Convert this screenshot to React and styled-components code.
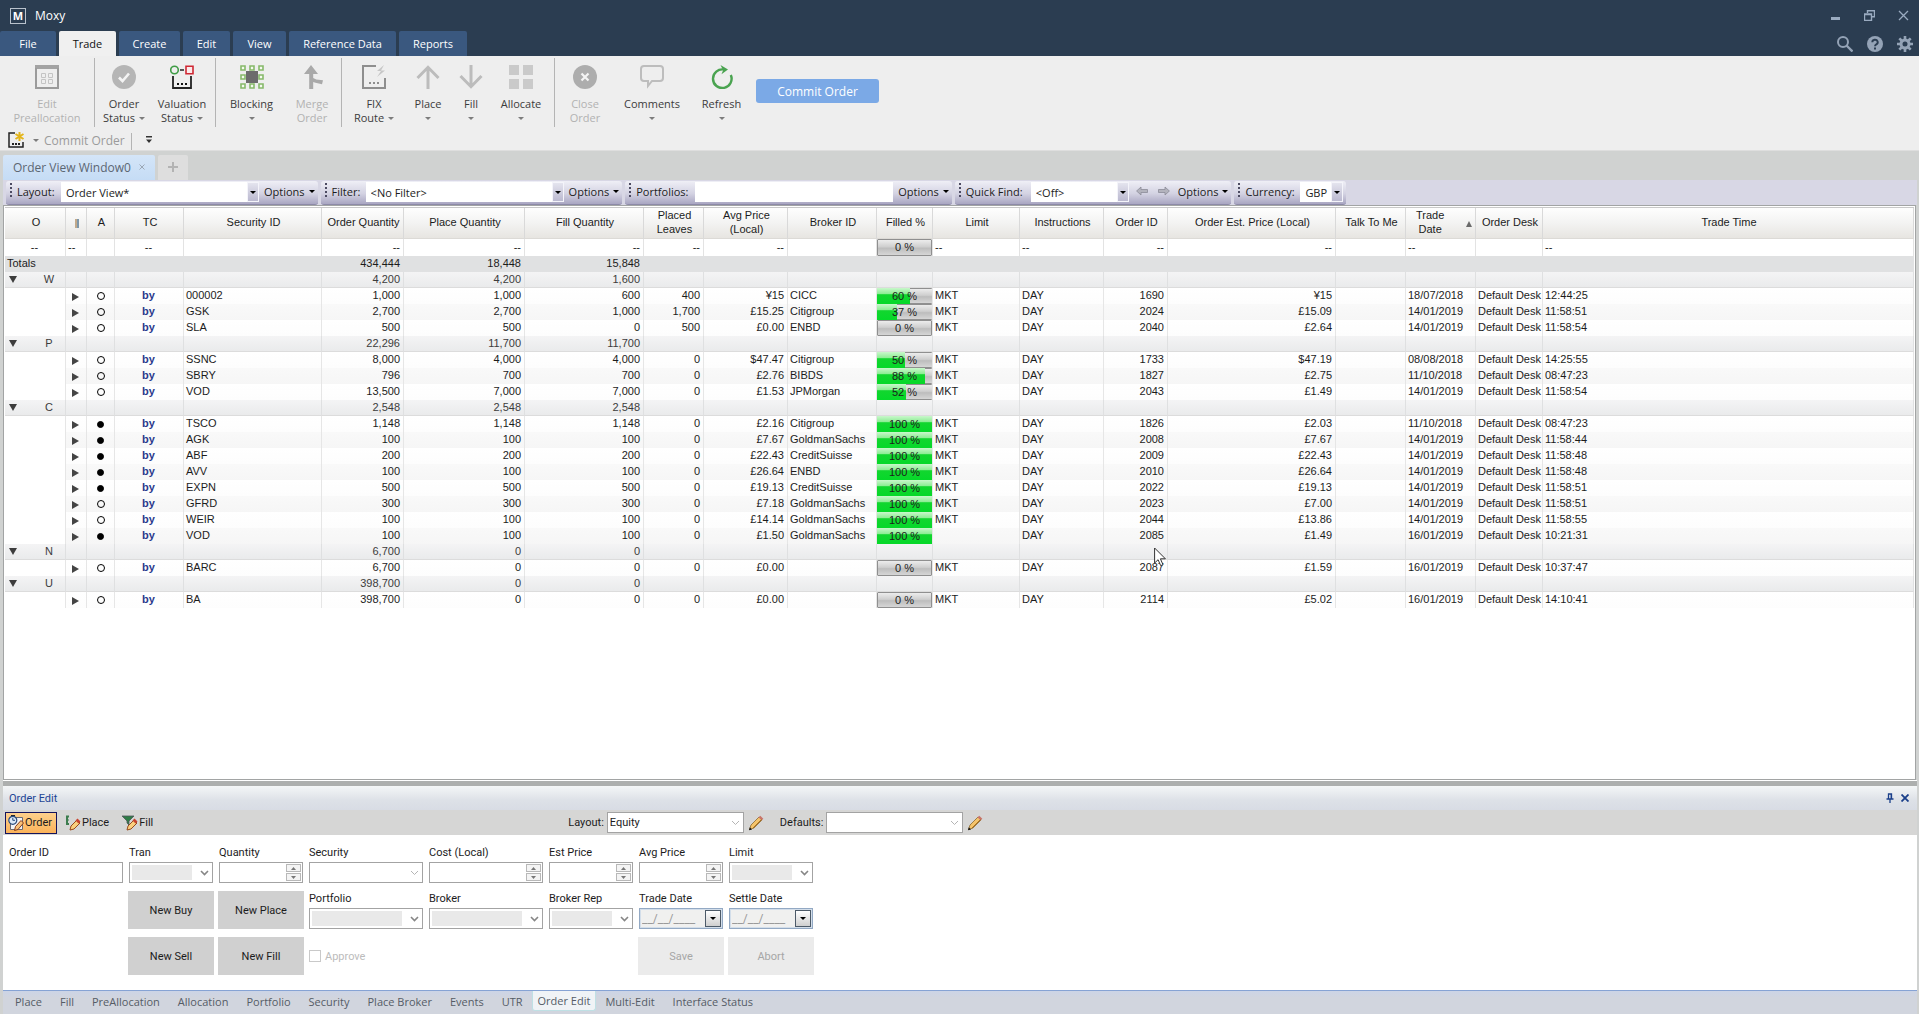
import React from "react";
import styled, { createGlobalStyle, css } from "styled-components";

const segoe = `"Open Sans", "Noto Sans", sans-serif`;
const tahoma = `Roboto, "DejaVu Sans", sans-serif`;
const arial = `"Liberation Sans", Arial, sans-serif`;

const Global = createGlobalStyle`
  *, *::before, *::after { box-sizing: border-box; }
  body { margin: 0; background: #d0d2d1; font-family: ${segoe}; font-size: 11px; color: #1c1c1c; }
  button, input, select { font: inherit; color: inherit; margin: 0; padding: 0; border: 0; border-radius: 0; background: none; outline: none; }
  svg { display: block; flex: none; }
`;

const Page = styled.div`
  display: flex;
  flex-direction: column;
  min-height: 100vh;
`;

/* ---------- title bar and menu tabs ---------- */

const Chrome = styled.header`
  background: #2b3d51;
  color: #fff;
`;

const TitleRow = styled.div`
  display: flex;
  align-items: center;
  height: 31px;
  padding: 0 10px;
  font-size: 12px;
`;

const Logo = styled.span`
  display: grid;
  place-items: center;
  width: 16px;
  height: 16px;
  margin-right: 9px;
  border: 1px solid #b9c2cc;
  font-size: 11px;
  font-weight: 700;
  line-height: 14px;
`;

const WindowButtons = styled.div`
  display: flex;
  gap: 23px;
  margin-left: auto;
  color: #9aabc0;
`;

const IconButton = styled.button`
  display: grid;
  place-items: center;
`;

const MenuRow = styled.nav`
  display: flex;
  align-items: flex-end;
  gap: 3px;
  height: 25px;
`;

const MenuTab = styled.button`
  width: ${(p) => p.$w}px;
  height: 25px;
  border-radius: 2px 2px 0 0;
  background: ${(p) => (p.$active ? "#f0f0f0" : "#3a587f")};
  color: ${(p) => (p.$active ? "#111" : "#fff")};
`;

const MenuTools = styled.div`
  display: flex;
  align-items: center;
  align-self: center;
  gap: 14px;
  margin-left: auto;
  padding-right: 6px;
  color: #94a3b6;
`;

/* ---------- ribbon ---------- */

const Ribbon = styled.div`
  display: flex;
  height: 73px;
  background: #eeeeee;
`;

const RibbonItem = styled.button`
  display: flex;
  flex-direction: column;
  align-items: center;
  width: ${(p) => p.$w}px;
  padding-top: 9px;
  line-height: 14px;
  color: ${(p) => (p.disabled ? "#b2b2b2" : "#3c3c3c")};
`;

const RibbonIcon = styled.span`
  display: grid;
  place-items: center;
  width: 24px;
  height: 24px;
  margin-bottom: 8px;
`;

const RibbonLine = styled.span`
  display: flex;
  align-items: center;
  gap: 4px;
  height: 14px;
`;

const Divider = styled.span`
  width: 1px;
  height: ${(p) => p.$h}px;
  margin: 2px ${(p) => p.$m || 0}px 0;
  background: #b4b4b4;
`;

const CommitButton = styled.button`
  width: 123px;
  height: 24px;
  margin: 23px 0 0 6px;
  border-radius: 3px;
  background: #7ba9e6;
  color: #fff;
  font-size: 12px;
`;

const Caret = styled.span`
  width: 0;
  height: 0;
  border: 3px solid transparent;
  border-bottom-width: 0;
  border-top-color: ${(p) => p.$c || "#7c7c7c"};
`;

const QuickRow = styled.div`
  display: flex;
  align-items: center;
  height: 22px;
  padding: 1px 0 0 8px;
  background: #eeeeee;
  border-bottom: 1px solid #dedede;
  font-size: 12px;
  color: #9b9b9b;
`;

const QuickButton = styled.button`
  display: flex;
  align-items: center;
  gap: 8px;
  margin-right: 5px;
`;

/* ---------- document tabs ---------- */

const DocTabs = styled.div`
  display: flex;
  align-items: flex-end;
  gap: 3px;
  height: 29px;
  padding-left: 3px;
`;

const DocTab = styled.button`
  display: flex;
  align-items: center;
  justify-content: ${(p) => (p.$plus ? "center" : "space-between")};
  width: ${(p) => (p.$plus ? 30 : 152)}px;
  height: 25px;
  padding: ${(p) => (p.$plus ? "0 0 1px" : "0 10px 1px")};
  border-radius: 2px 2px 0 0;
  background: ${(p) => (p.$plus ? "#dedede" : "linear-gradient(#d4e5f8, #c5dcf5)")};
  color: ${(p) => (p.$plus ? "#b4b4b4" : "#5c6672")};
  font-size: 12px;
`;

/* ---------- view toolbar ---------- */

const Strip = styled.div`
  display: flex;
  gap: 3px;
  height: 25px;
  margin: 0 2px 0 3px;
  padding: 1px 3px;
  background: #d8d7e5;
`;

const StripGroup = styled.form`
  display: flex;
  align-items: flex-start;
  height: 24px;
  padding: 1px 3px 0;
  border-radius: 3px;
  border-bottom: 1px solid #8d8aa8;
  background: linear-gradient(#efeff6, #d3d2e2 55%, #a9a6c2);
`;

const Grip = styled.span`
  width: 2px;
  height: 16px;
  margin: 1px 5px 0 1px;
  background: repeating-linear-gradient(#4c4b62 0 2px, transparent 2px 4px);
`;

const StripLabel = styled.label`
  min-width: ${(p) => p.$w}px;
  line-height: 19px;
`;

const ComboWrap = styled.span`
  position: relative;
  display: block;
  width: ${(p) => p.$w}px;
`;

const StripSelect = styled.select`
  display: block;
  width: 100%;
  height: 20px;
  padding: 0 12px 0 5px;
  appearance: none;
  background: #fff;
`;

const StripInput = styled.input`
  width: ${(p) => p.$w}px;
  height: 20px;
  background: #fff;
`;

const StripArrow = styled.span`
  position: absolute;
  top: 0;
  right: 0;
  display: grid;
  place-items: center;
  width: 12px;
  height: 20px;
  border: 1px solid #f4f4fa;
  background: linear-gradient(#e4e4ee, #bbb9d0);
  pointer-events: none;
`;

const OptionsButton = styled.button`
  display: flex;
  align-items: center;
  gap: 4px;
  height: 19px;
  padding: 0 0 0 5px;
`;

const FindArrow = styled.button`
  margin: 4px 3px 0 7px;
`;

/* ---------- order grid ---------- */

const Frame = styled.main`
  flex: 1;
  margin: 0 3px 0 3px;
  padding: 1px;
  border: 1px solid #a2a4a4;
  background: #fff;
`;

const Grid = styled.table`
  width: 100%;
  table-layout: fixed;
  border-collapse: separate;
  border-spacing: 0;
  border-top: 1px solid #c9c9c9;
  font-family: ${arial};
`;

const Th = styled.th`
  height: 31px;
  padding: 0 0 2px 2px;
  border-right: 1px solid #d9d9d9;
  border-bottom: 1px solid #dcdad6;
  background: linear-gradient(#fefefe, #f3f3f2 50%, #e7e5e1);
  font-weight: 400;
  line-height: 14px;
  white-space: pre-line;
`;

const HeadMark = styled.svg`
  margin: 2px auto 0;
`;

const SortHead = styled.span`
  display: flex;
  align-items: center;
  justify-content: space-between;
  padding: 0 3px 0 8px;
`;

const SortMark = styled.span`
  margin-top: 4px;
  border: 3px solid transparent;
  border-top: 0;
  border-bottom: 6px solid #6a6a6a;
`;

const rowLook = {
  filter: css`
    --line: #e3e3e3;
    background: #fff;
  `,
  totals: css`
    --line: #e0e1e2;
    background: #e0e1e2;
  `,
  group: css`
    --line: #dfe0e1;
    background: linear-gradient(#f4f4f5, #e9eaeb);
    color: #3c3c3c;
  `,
  order: css`
    --line: #e6e6e6;
    background: linear-gradient(#ffffff, #fdfdfd);
  `,
  orderAlt: css`
    --line: #e6e6e6;
    background: linear-gradient(#f9f9f9, #f6f6f6);
  `,
};

const Tr = styled.tr`
  ${(p) => rowLook[p.$kind]}
`;

const Td = styled.td`
  height: ${(p) => (p.$tall ? 17 : 16)}px;
  padding: ${(p) => (p.$flush ? "0" : p.$ruled || p.$tall ? "0 3px 0 2px" : "0 3px 1px 2px")};
  border-right: 1px solid var(--line);
  border-bottom: ${(p) => (p.$ruled ? "1px solid #dcdcdc" : "0")};
  background: ${(p) => (p.$blank ? "#fff" : "transparent")};
  line-height: 15px;
  text-align: ${(p) => p.$align || "left"};
  white-space: nowrap;
  overflow: ${(p) => (p.$spill ? "visible" : "hidden")};
`;

const Side = styled.span`
  color: #2b3a8c;
  font-weight: 700;
`;

const Dot = styled.span`
  display: block;
  width: ${(p) => (p.$full ? 7 : 8)}px;
  height: ${(p) => (p.$full ? 7 : 8)}px;
  margin: 0 auto;
  border: 1px solid #000;
  border-radius: 50%;
  background: ${(p) => (p.$full ? "#000" : "transparent")};
`;

const Expand = styled.button`
  display: block;
  width: 0;
  height: 0;
  margin: 2px 0 0 6px;
  border: 4px solid transparent;
  border-left: 7px solid #444;
  border-right: 0;
`;

const GroupCell = styled.span`
  display: flex;
  align-items: center;
  gap: 19px;
  padding-left: 4px;
`;

const GroupName = styled.span`
  width: 26px;
  text-align: center;
`;

const Collapse = styled.button`
  width: 0;
  height: 0;
  border: 4px solid transparent;
  border-top: 7px solid #3d3d3d;
  border-bottom: 0;
`;

const Meter = styled.div`
  position: relative;
  height: ${(p) => (p.$tall ? 17 : 16)}px;
  border: 1px solid #8f8f8f;
  border-width: ${(p) => (p.$zero ? "1px" : "1px 0")};
  border-radius: 1px;
  background: linear-gradient(#ececec, #cfcfcf 45%, #bdbdbd 55%, #d6d6d6);
  line-height: 15px;
  text-align: center;
`;

const MeterFill = styled.span`
  position: absolute;
  top: -1px;
  bottom: -1px;
  left: 0;
  background: linear-gradient(#c9f7cb, #8fee96 35%, #12d62f 42%, #06d829);
`;

const MeterText = styled.span`
  position: relative;
`;

const Splitter = styled.div`
  height: 6px;
  margin: 0 2px 0 3px;
  border-top: 1px solid #fff;
  background: #adafae;
`;

/* ---------- order edit panel ---------- */

const Panel = styled.section`
  margin: 0 2px 0 3px;
  background: #fff;
  font-family: ${tahoma};
`;

const PanelTitle = styled.div`
  display: flex;
  align-items: center;
  gap: 7px;
  height: 24px;
  padding: 0 8px 0 6px;
  background: linear-gradient(#f4f6f7, #dde1e7 60%, #d8dce4);
  color: #1d4596;
`;

const PanelName = styled.h2`
  flex: 1;
  margin: 0;
  font: inherit;
`;

const PanelBar = styled.div`
  display: flex;
  align-items: center;
  height: 25px;
  padding-left: 2px;
  background: #d6d6d5;
`;

const ModeButton = styled.button`
  display: flex;
  align-items: center;
  gap: 1px;
  height: 22px;
  margin-right: 5px;
  padding: 0 4px 0 2px;
  border: 1px solid ${(p) => (p.$active ? "#14145c" : "transparent")};
  background: ${(p) => (p.$active ? "linear-gradient(#fdd08c, #fbb35a)" : "none")};
`;

const BarFields = styled.div`
  display: flex;
  align-items: center;
  margin-left: 405px;
`;

const BarLabel = styled.label`
  padding-right: 3px;
`;

const PencilButton = styled.button`
  margin: 0 16px 0 4px;
`;

const Form = styled.form`
  display: grid;
  grid-template-columns: 114px 84px 84px 114px 114px 84px 84px 84px;
  grid-template-rows: 38px 38px 38px;
  gap: 8px 6px;
  height: 155px;
  padding: 10px 6px;
`;

const Field = styled.div`
  display: flex;
  flex-direction: column;
  justify-content: space-between;
  grid-column: ${(p) => p.$col};
  grid-row: ${(p) => p.$row};
`;

const FieldLabel = styled.label`
  line-height: 16px;
`;

const Box = styled.span`
  position: relative;
  display: block;
  width: ${(p) => (p.$w ? p.$w + "px" : "auto")};
  height: 21px;
`;

const TextBox = styled.input`
  display: block;
  width: 100%;
  height: 21px;
  padding: 0 4px;
  border: 1px solid #a3a3a3;
  background: #fff;
`;

const DateBox = styled(TextBox)`
  padding: 0 2px;
  border-color: #93a9c4;
  background: #f0f0ef;
  box-shadow: inset 0 0 0 1px #d3deea;
  color: #9a9a9a;
  font-size: 12px;
`;

const ListBox = styled.select`
  display: block;
  width: 100%;
  height: 21px;
  padding: 0 20px 0 2px;
  appearance: none;
  border: 1px solid #a3a3a3;
  opacity: 1;
  background: ${(p) =>
    p.$grey
      ? "linear-gradient(#e9e9e9, #e9e9e9) 2px 2px / calc(100% - 22px) 15px no-repeat #fff"
      : "#fff"};
`;

const ArrowMark = styled.svg`
  position: absolute;
  top: 8px;
  right: 4px;
  pointer-events: none;
`;

const Spin = styled.span`
  position: absolute;
  top: 2px;
  right: 2px;
  display: grid;
  gap: 1px;
`;

const SpinButton = styled.button`
  display: grid;
  place-items: center;
  width: 15px;
  height: 8px;
  border: 1px solid #b8b8b8;
  background: #f4f4f4;
`;

const DateButton = styled.button`
  position: absolute;
  top: 2px;
  right: 2px;
  display: grid;
  place-items: center;
  width: 16px;
  height: 17px;
  border: 1px solid #4d5a68;
  background: linear-gradient(#fff, #cfcfcf);
`;

const BigButton = styled.button`
  grid-column: ${(p) => p.$col};
  grid-row: ${(p) => p.$row};
  margin: 0 -1px;
  background: ${(p) => (p.disabled ? "#ebebeb" : "#d0d0d0")};
  color: ${(p) => (p.disabled ? "#a6a6a6" : "#1c1c1c")};
`;

const Approve = styled.label`
  display: flex;
  align-items: center;
  gap: 4px;
  grid-column: 4;
  grid-row: 3;
  color: #bcbcbc;
`;

const Check = styled.input`
  width: 12px;
  height: 12px;
  appearance: none;
  border: 1px solid #c9c9c9;
  background: #fff;
`;

const BottomTabs = styled.nav`
  display: flex;
  height: 24px;
  margin: 0 2px 0 3px;
  padding-left: 3px;
  border-top: 1px solid #86a3d4;
  background: linear-gradient(#ccd4e6, #d1d5de 30%);
`;

const BottomTab = styled.button`
  height: 20px;
  padding: 0 ${(p) => (p.$active ? 5 : 9)}px;
  border: ${(p) => (p.$active ? "1px solid #bfe0e4" : "0")};
  border-top: 0;
  border-radius: 0 0 3px 3px;
  background: ${(p) => (p.$active ? "#f0f3f6" : "none")};
  color: #555c66;
`;

const Pointer = styled.svg`
  position: absolute;
  left: 1154px;
  top: 547px;
  pointer-events: none;
`;

/* ---------- drawings ---------- */

const icons = {
  prealloc: (
    <svg width="24" height="24" viewBox="0 0 24 24" fill="none" stroke="#999">
      <path d="M0 0h24v4H0z" fill="#a3a3a3" stroke="none" />
      <path d="M1 3v20h22V3" strokeWidth="2" stroke="#9b9b9b" />
      <path d="M6.5 8.500h4v4h-4zM13.500 8.500h4v4h-4zM6.500 14.500h4v4h-4zM13.500 14.500h4v4h-4z" stroke="#c4c4c4" />
    </svg>
  ),
  status: (
    <svg width="24" height="24" viewBox="0 0 24 24">
      <circle cx="12" cy="12" r="12" fill="#b5b5b5" />
      <path d="M7 12.500l3.500 3.500 6.500-7.500" fill="none" stroke="#f4f4f4" strokeWidth="2.600" />
    </svg>
  ),
  valuation: (
    <svg width="24" height="24" viewBox="0 0 24 24" fill="none">
      <circle cx="4.500" cy="5" r="3.800" stroke="#3f9c46" strokeWidth="1.600" />
      <path d="M10 5h4" stroke="#222" strokeWidth="1.500" />
      <path d="M16 1.200h7v7.500h-7z" stroke="#cf2733" strokeWidth="1.600" fill="#fbe9ea" />
      <path d="M3 11v12h18V11" stroke="#222" strokeWidth="1.800" />
      <path d="M7 18h2v2H7zM11 18h2v2h-2zM15 18h2v2h-2z" fill="#111" />
    </svg>
  ),
  blocking: (
    <svg width="24" height="24" viewBox="0 0 24 24" fill="#f4faef" stroke="#86b96a" strokeWidth="1.600">
      <path d="M1 1h4v4H1zM10 1h4v4h-4zM19 1h4v4h-4zM1 10h4v4H1zM19 10h4v4h-4zM1 19h4v4H1zM10 19h4v4h-4zM19 19h4v4h-4z" />
      <path d="M6 6h12v12H6z" fill="#6c6c6c" stroke="none" />
    </svg>
  ),
  merge: (
    <svg width="24" height="24" viewBox="0 0 24 24" fill="#a9a9a9">
      <path d="M11 0l7 9h-4.800v4l3 1.500 6.800.7-1 4-6.500-1.500-2.300-.8V24H9.200V9H4z" />
    </svg>
  ),
  fix: (
    <svg width="24" height="24" viewBox="0 0 24 24" fill="none">
      <path d="M14 1H1v22h22V13" stroke="#8e8e8e" strokeWidth="2" />
      <path d="M22 0l-7 6h4l-4 6 8-6.500h-4z" fill="#c6c6c6" />
      <path d="M7 17h2v2H7zM11 17h2v2h-2zM15 17h2v2h-2z" fill="#8e8e8e" />
    </svg>
  ),
  up: (
    <svg width="24" height="24" viewBox="0 0 24 24" fill="none" stroke="#bcbcbc" strokeWidth="3">
      <path d="M12 24V2M1.500 13L12 2.300 22.500 13" />
    </svg>
  ),
  down: (
    <svg width="24" height="24" viewBox="0 0 24 24" fill="none" stroke="#bcbcbc" strokeWidth="3">
      <path d="M12 0v22M1.500 11L12 21.700 22.500 11" />
    </svg>
  ),
  allocate: (
    <svg width="24" height="24" viewBox="0 0 24 24" fill="#cacaca">
      <path d="M0 0h10v10H0zM14 0h10v10H14zM0 14h10v10H0zM14 14h10v10H14z" />
    </svg>
  ),
  close: (
    <svg width="24" height="24" viewBox="0 0 24 24">
      <circle cx="12" cy="12" r="12" fill="#adadad" />
      <path d="M8.500 8.500l7 7M15.500 8.500l-7 7" stroke="#f4f4f4" strokeWidth="2.200" />
    </svg>
  ),
  comments: (
    <svg width="24" height="24" viewBox="0 0 24 24" fill="none" stroke="#bdbdbd" strokeWidth="2">
      <path d="M4 1h16a3 3 0 0 1 3 3v9a3 3 0 0 1-3 3h-8l-4 5v-5H4a3 3 0 0 1-3-3V4a3 3 0 0 1 3-3z" />
    </svg>
  ),
  refresh: (
    <svg width="24" height="24" viewBox="0 0 24 24" fill="none">
      <path d="M20.800 10A9.300 9.300 0 1 1 14 4.600" stroke="#4aa350" strokeWidth="2.400" />
      <path d="M10.500 0L18 4.600 11.500 9.200l1.600-4z" fill="#4aa350" />
    </svg>
  ),
};

const OrderIcon = () => (
  <svg width="16" height="16" viewBox="0 0 16 16">
    <path d="M2.500 2.500h12v12h-12z" fill="#f3f4f6" stroke="#6a6a72" />
    <path d="M3 0h4v1.500H3z" fill="#222" />
    <circle cx="4.800" cy="5.300" r="4" fill="#dbe9f7" stroke="#294a7a" strokeWidth="1.200" />
    <path d="M4.800 2.800V5.300H7" stroke="#294a7a" fill="none" />
    <path d="M6.500 15.500l1-4 5.500-6 2.500 2.500-5.500 6.500z" fill="#f8c27a" stroke="#8a3a14" />
  </svg>
);

const PlaceIcon = () => (
  <svg width="16" height="16" viewBox="0 0 16 16">
    <path d="M4 1.500H2v3.500M4 9H2V5M2 5h1.500" stroke="#3d7d4f" strokeWidth="2" fill="none" />
    <path d="M5 15l1-4 6-6 3 3-6 6z" fill="#f9d07e" stroke="#9a4a1c" />
    <path d="M10.500 5.500l2-2 3 3-2 2z" fill="#c8432f" />
  </svg>
);

const FillIcon = () => (
  <svg width="16" height="16" viewBox="0 0 16 16">
    <path d="M0 1h12L7 6v4L5 8V6z" fill="#2f7d46" stroke="#50565a" strokeWidth=".8" />
    <path d="M5 15l1-4 6-6 3 3-6 6z" fill="#f9d07e" stroke="#9a4a1c" />
    <path d="M10.500 5.500l2-2 3 3-2 2z" fill="#c8432f" />
  </svg>
);

const Pencil = () => (
  <svg width="16" height="16" viewBox="0 0 16 16">
    <path d="M1.500 14.500l1.500-4.500 8-8 3 3-8 8z" fill="#f5c46a" stroke="#8b6a30" strokeWidth=".8" />
    <path d="M10.500 2.200L12.300.7 15.300 3.700l-1.600 1.700z" fill="#c9756a" />
    <path d="M1 15.300l.8-3 2.200 2.200z" fill="#111" />
    <path d="M5 13l8.500-8.500" stroke="#a56f20" />
  </svg>
);

const Chevron = ({ soft }) => (
  <ArrowMark width="9" height="6" viewBox="0 0 9 6" fill="none" stroke={soft ? "#b5b5b5" : "#868686"} strokeWidth={soft ? 1 : 1.6}>
    <path d="M1 1l3.500 3.500L8 1" />
  </ArrowMark>
);

/* ---------- data ---------- */

const menu = [
  ["File", 56], ["Trade", 57], ["Create", 61], ["Edit", 47], ["View", 53], ["Reference Data", 107], ["Reports", 68],
];

const ribbon = [
  { id: "prealloc", w: 94, lines: ["Edit", "Preallocation"], disabled: true },
  { sep: 0 },
  { id: "status", w: 58, lines: ["Order", "Status"], caret: true },
  { id: "valuation", w: 58, lines: ["Valuation", "Status"], caret: true },
  { sep: 4 },
  { id: "blocking", w: 63, lines: ["Blocking"], caret: true },
  { id: "merge", w: 58, lines: ["Merge", "Order"], disabled: true },
  { sep: 0 },
  { id: "fix", w: 64, lines: ["FIX", "Route"], caret: true },
  { id: "up", w: 44, lines: ["Place"], caret: true },
  { id: "down", w: 42, lines: ["Fill"], caret: true },
  { id: "allocate", w: 58, lines: ["Allocate"], caret: true },
  { sep: 4 },
  { id: "close", w: 52, lines: ["Close", "Order"], disabled: true },
  { id: "comments", w: 82, lines: ["Comments"], caret: true },
  { id: "refresh", w: 57, lines: ["Refresh"], caret: true },
];

const columns = [
  ["O", 61, "center"], ["|", 21, "left"], ["A", 28, "center"], ["TC", 69, "center"], ["Security ID", 138, "left"],
  ["Order Quantity", 82, "right"], ["Place Quantity", 121, "right"], ["Fill Quantity", 119, "right"],
  ["Placed\nLeaves", 60, "right"], ["Avg Price\n(Local)", 84, "right"], ["Broker ID", 89, "left"], ["Filled %", 56, "center"],
  ["Limit", 87, "left"], ["Instructions", 84, "left"], ["Order ID", 64, "right"], ["Order Est. Price (Local)", 168, "right"],
  ["Talk To Me", 70, "left"], ["Trade\nDate", 70, "left"], ["Order Desk", 67, "left"], ["Trade Time", 0, "left"],
];

const filterRow = ["--", "--", "", "--", "", "--", "--", "--", "--", "--", "", 0, "--", "--", "--", "--", "", "--", "", "--"];

const o = (full, sec, qty, place, fill, leaves, avg, broker, pct, limit, id, est, date, time) => ({
  full, cells: [sec, qty, place, fill, leaves, avg, broker, pct, limit, "DAY", id, est, "", date, "Default Desk", time],
});

const groups = [
  { name: "W", sums: ["4,200", "4,200", "1,600"], orders: [
    o(0, "000002", "1,000", "1,000", "600", "400", "¥15", "CICC", 60, "MKT", "1690", "¥15", "18/07/2018", "12:44:25"),
    o(0, "GSK", "2,700", "2,700", "1,000", "1,700", "£15.25", "Citigroup", 37, "MKT", "2024", "£15.09", "14/01/2019", "11:58:51"),
    o(0, "SLA", "500", "500", "0", "500", "£0.00", "ENBD", 0, "MKT", "2040", "£2.64", "14/01/2019", "11:58:54"),
  ] },
  { name: "P", sums: ["22,296", "11,700", "11,700"], orders: [
    o(0, "SSNC", "8,000", "4,000", "4,000", "0", "$47.47", "Citigroup", 50, "MKT", "1733", "$47.19", "08/08/2018", "14:25:55"),
    o(0, "SBRY", "796", "700", "700", "0", "£2.76", "BIBDS", 88, "MKT", "1827", "£2.75", "11/10/2018", "08:47:23"),
    o(0, "VOD", "13,500", "7,000", "7,000", "0", "£1.53", "JPMorgan", 52, "MKT", "2043", "£1.49", "14/01/2019", "11:58:54"),
  ] },
  { name: "C", sums: ["2,548", "2,548", "2,548"], orders: [
    o(1, "TSCO", "1,148", "1,148", "1,148", "0", "£2.16", "Citigroup", 100, "MKT", "1826", "£2.03", "11/10/2018", "08:47:23"),
    o(1, "AGK", "100", "100", "100", "0", "£7.67", "GoldmanSachs", 100, "MKT", "2008", "£7.67", "14/01/2019", "11:58:44"),
    o(1, "ABF", "200", "200", "200", "0", "£22.43", "CreditSuisse", 100, "MKT", "2009", "£22.43", "14/01/2019", "11:58:48"),
    o(1, "AVV", "100", "100", "100", "0", "£26.64", "ENBD", 100, "MKT", "2010", "£26.64", "14/01/2019", "11:58:48"),
    o(1, "EXPN", "500", "500", "500", "0", "£19.13", "CreditSuisse", 100, "MKT", "2022", "£19.13", "14/01/2019", "11:58:51"),
    o(0, "GFRD", "300", "300", "300", "0", "£7.18", "GoldmanSachs", 100, "MKT", "2023", "£7.00", "14/01/2019", "11:58:51"),
    o(0, "WEIR", "100", "100", "100", "0", "£14.14", "GoldmanSachs", 100, "MKT", "2044", "£13.86", "14/01/2019", "11:58:55"),
    o(1, "VOD", "100", "100", "100", "0", "£1.50", "GoldmanSachs", 100, "", "2085", "£1.49", "16/01/2019", "10:21:31"),
  ] },
  { name: "N", sums: ["6,700", "0", "0"], orders: [
    o(0, "BARC", "6,700", "0", "0", "0", "£0.00", "", 0, "MKT", "2087", "£1.59", "16/01/2019", "10:37:47"),
  ] },
  { name: "U", sums: ["398,700", "0", "0"], orders: [
    o(0, "BA", "398,700", "0", "0", "0", "£0.00", "", 0, "MKT", "2114", "£5.02", "16/01/2019", "14:10:41"),
  ] },
];

const bottomTabs = [
  "Place", "Fill", "PreAllocation", "Allocation", "Portfolio", "Security", "Place Broker", "Events", "UTR",
  "Order Edit", "Multi-Edit", "Interface Status",
];

/* ---------- composed parts ---------- */

const RibbonEntry = ({ item }) => {
  const [first, second] = item.lines;
  return (
    <RibbonItem type="button" $w={item.w} disabled={item.disabled}>
      <RibbonIcon>{icons[item.id]}</RibbonIcon>
      <RibbonLine>{first}</RibbonLine>
      <RibbonLine>
        {second}
        {item.caret && <Caret />}
      </RibbonLine>
    </RibbonItem>
  );
};

const StripCombo = ({ id, label, labelWidth, width, value, children }) => (
  <StripGroup>
    <Grip />
    <StripLabel htmlFor={id} $w={labelWidth}>{label}</StripLabel>
    <ComboWrap $w={width}>
      <StripSelect id={id}>
        <option>{value}</option>
      </StripSelect>
      <StripArrow><Caret $c="#000" /></StripArrow>
    </ComboWrap>
    {children}
  </StripGroup>
);

const Options = () => (
  <OptionsButton type="button">Options<Caret $c="#000" /></OptionsButton>
);

const Fill = ({ value, tall }) => (
  <Meter $tall={tall} $zero={value === 0}>
    <MeterFill style={{ width: `${value}%` }} />
    <MeterText>{value} %</MeterText>
  </Meter>
);

const Cell = ({ index, value, ...rest }) => {
  const isMeter = index === 11 && value !== "";
  return (
    <Td $align={columns[index][2]} $flush={isMeter} {...rest}>
      {isMeter ? <Fill value={value} tall={rest.$tall} /> : value}
    </Td>
  );
};

const GroupRows = ({ group }) => (
  <>
    <Tr $kind="group">
      <Td $ruled $flush>
        <GroupCell>
          <Collapse type="button" aria-label={`Collapse ${group.name}`} />
          <GroupName>{group.name}</GroupName>
        </GroupCell>
      </Td>
      {columns.slice(1).map((c, i) => (
        <Td key={c[0]} $ruled $align={c[2]}>{group.sums[i - 4]}</Td>
      ))}
    </Tr>
    {group.orders.map((order, n) => (
      <Tr key={order.cells[10]} $kind={n % 2 ? "orderAlt" : "order"}>
        <Td $blank />
        <Td $flush><Expand type="button" aria-label={`Expand ${order.cells[0]}`} /></Td>
        <Td $flush><Dot $full={order.full} /></Td>
        <Td $align="center"><Side>by</Side></Td>
        {order.cells.map((value, i) => (
          <Cell key={i} index={i + 4} value={value} />
        ))}
      </Tr>
    ))}
  </>
);

const SpinField = ({ id, label, col }) => (
  <Field $col={col} $row={1}>
    <FieldLabel htmlFor={id}>{label}</FieldLabel>
    <Box>
      <TextBox id={id} />
      <Spin>
        <SpinButton type="button" aria-label={`Increase ${label}`}>
          <svg width="5" height="3" viewBox="0 0 5 3" fill="#777"><path d="M0 3L2.500 0 5 3z" /></svg>
        </SpinButton>
        <SpinButton type="button" aria-label={`Decrease ${label}`}>
          <svg width="5" height="3" viewBox="0 0 5 3" fill="#777"><path d="M0 0l2.500 3L5 0z" /></svg>
        </SpinButton>
      </Spin>
    </Box>
  </Field>
);

const ListField = ({ id, label, col, row, grey }) => (
  <Field $col={col} $row={row}>
    <FieldLabel htmlFor={id}>{label}</FieldLabel>
    <Box>
      <ListBox id={id} $grey={grey} />
      <Chevron soft={!grey} />
    </Box>
  </Field>
);

const DateField = ({ id, label, col }) => (
  <Field $col={col} $row={2}>
    <FieldLabel htmlFor={id}>{label}</FieldLabel>
    <Box>
      <DateBox id={id} defaultValue="__/__/____" />
      <DateButton type="button" aria-label={`Pick ${label}`}><Caret $c="#000" /></DateButton>
    </Box>
  </Field>
);

const heading = (name) => {
  if (name === "|") {
    return (
      <HeadMark width="4" height="9" viewBox="0 0 4 9">
        <path d="M0 0h2v9H0z" fill="#c2a98a" />
        <path d="M2 0h2v9H2z" fill="#7d97ab" />
      </HeadMark>
    );
  }
  if (name === "Trade\nDate") {
    return <SortHead><span>{name}</span><SortMark /></SortHead>;
  }
  return name;
};

export default function App() {
  return (
    <Page>
      <Global />
      <Chrome>
        <TitleRow>
          <Logo>M</Logo>
          Moxy
          <WindowButtons>
            <IconButton type="button" aria-label="Minimize">
              <svg width="10" height="11" viewBox="0 0 10 11"><path d="M0 7h9v3H0z" fill="currentColor" /></svg>
            </IconButton>
            <IconButton type="button" aria-label="Restore">
              <svg width="11" height="11" viewBox="0 0 11 11" fill="none" stroke="currentColor">
                <path d="M3.500 3V.8h7v6H8M.5 4h7v6.500h-7zM.5 4.500h7" strokeWidth="1.400" />
              </svg>
            </IconButton>
            <IconButton type="button" aria-label="Close">
              <svg width="11" height="11" viewBox="0 0 11 11" fill="none" stroke="currentColor" strokeWidth="1.300">
                <path d="M1 1l9 9M10 1L1 10" />
              </svg>
            </IconButton>
          </WindowButtons>
        </TitleRow>
        <MenuRow>
          {menu.map(([name, w]) => (
            <MenuTab key={name} type="button" $w={w} $active={name === "Trade"}>{name}</MenuTab>
          ))}
          <MenuTools>
            <IconButton type="button" aria-label="Search">
              <svg width="16" height="16" viewBox="0 0 16 16" fill="none" stroke="currentColor" strokeWidth="2">
                <circle cx="6" cy="6" r="5" /><path d="M9.500 9.500l6 6" strokeWidth="2.400" />
              </svg>
            </IconButton>
            <IconButton type="button" aria-label="Help">
              <svg width="16" height="16" viewBox="0 0 16 16">
                <circle cx="8" cy="8" r="8" fill="currentColor" />
                <path d="M5.300 6.200a2.700 2.500 0 1 1 4 2.200c-.9.500-1.300.8-1.300 1.800" fill="none" stroke="#2b3d51" strokeWidth="1.900" />
                <path d="M7 11.400h2v2H7z" fill="#2b3d51" />
              </svg>
            </IconButton>
            <IconButton type="button" aria-label="Settings">
              <svg width="16" height="16" viewBox="0 0 16 16" fill="none" stroke="currentColor">
                <circle cx="8" cy="8" r="4" strokeWidth="3" />
                <path d="M8 0v3M8 13v3M0 8h3M13 8h3M2.300 2.300l2.200 2.200M11.500 11.500l2.200 2.200M13.700 2.300l-2.200 2.200M4.500 11.500l-2.200 2.200" strokeWidth="2.600" />
              </svg>
            </IconButton>
          </MenuTools>
        </MenuRow>
      </Chrome>

      <Ribbon>
        {ribbon.map((item, i) =>
          item.id ? <RibbonEntry key={item.id} item={item} /> : <Divider key={i} $h={69} $m={item.sep} />
        )}
        <CommitButton type="button">Commit Order</CommitButton>
      </Ribbon>
      <QuickRow>
        <QuickButton type="button" aria-label="New order">
          <svg width="17" height="16" viewBox="0 0 17 16" fill="none">
            <path d="M7 1H1v14h14V10" stroke="#222" strokeWidth="1.500" />
            <path d="M4 11h2v2H4zM7 11h2v2H7zM10 11h2v2h-2z" fill="#222" />
            <path d="M11.500 0v9M7.500 2l8 5M15.500 2l-8 5" stroke="#e3b51b" strokeWidth="2" />
          </svg>
          <Caret />
        </QuickButton>
        Commit Order
        <Divider $h={17} $m={6} />
        <IconButton type="button" aria-label="Customize">
          <svg width="22" height="8" viewBox="0 0 22 8"><path d="M8 0h6v1.500H8zM8 3.500h6L11 7z" fill="#333" /></svg>
        </IconButton>
      </QuickRow>

      <DocTabs>
        <DocTab type="button">
          Order View Window0
          <svg width="6" height="6" viewBox="0 0 6 6" stroke="#9ba7b5"><path d="M.5.5l5 5M5.500.5l-5 5" /></svg>
        </DocTab>
        <DocTab type="button" $plus aria-label="New window">
          <svg width="10" height="10" viewBox="0 0 10 10" stroke="#b3b3b3" strokeWidth="2"><path d="M5 0v10M0 5h10" /></svg>
        </DocTab>
      </DocTabs>

      <Strip>
        <StripCombo id="layout" label="Layout:" labelWidth={44} width={198} value="Order View*"><Options /></StripCombo>
        <StripCombo id="filter" label="Filter:" labelWidth={34} width={198} value="<No Filter>"><Options /></StripCombo>
        <StripGroup>
          <Grip />
          <StripLabel htmlFor="portfolios" $w={59}>Portfolios:</StripLabel>
          <StripInput id="portfolios" $w={198} />
          <Options />
        </StripGroup>
        <StripCombo id="find" label="Quick Find:" labelWidth={65} width={98} value="<Off>">
          <FindArrow type="button" aria-label="Previous">
            <svg width="12" height="10" viewBox="0 0 12 10" fill="#b3b3bd" stroke="#8b8b98" strokeWidth=".8"><path d="M.6 5L5 1v2.500h6.500v3H5V9z" /></svg>
          </FindArrow>
          <FindArrow type="button" aria-label="Next">
            <svg width="12" height="10" viewBox="0 0 12 10" fill="#b3b3bd" stroke="#8b8b98" strokeWidth=".8"><path d="M11.400 5L7 1v2.500H.5v3H7V9z" /></svg>
          </FindArrow>
          <Options />
        </StripCombo>
        <StripCombo id="currency" label="Currency:" labelWidth={55} width={43} value="GBP" />
      </Strip>

      <Frame>
        <Grid>
          <colgroup>
            {columns.map(([name, w]) => <col key={name} width={w || undefined} />)}
          </colgroup>
          <thead>
            <tr>
              {columns.map(([name]) => (
                <Th key={name} scope="col">{heading(name)}</Th>
              ))}
            </tr>
          </thead>
          <tbody>
            <Tr $kind="filter">
              {filterRow.map((v, i) => <Cell key={i} index={i} value={v} $tall />)}
            </Tr>
            <Tr $kind="totals">
              <Td $spill>Totals</Td>
              {columns.slice(1).map((c, i) => (
                <Td key={c[0]} $align={c[2]}>{["434,444", "18,448", "15,848"][i - 4]}</Td>
              ))}
            </Tr>
            {groups.map((g) => <GroupRows key={g.name} group={g} />)}
          </tbody>
        </Grid>
      </Frame>
      <Splitter />

      <Panel>
        <PanelTitle>
          <PanelName>Order Edit</PanelName>
          <IconButton type="button" aria-label="Pin">
            <svg width="8" height="10" viewBox="0 0 8 10" fill="none" stroke="#1a3f8a" strokeWidth="1.300"><path d="M2.500 1h3v5h-3zM.5 6h7M4 6v4M5.200 1v5" /></svg>
          </IconButton>
          <IconButton type="button" aria-label="Close panel">
            <svg width="8" height="8" viewBox="0 0 8 8" stroke="#1a3f8a" strokeWidth="1.800"><path d="M.5.5l7 7M7.500.5l-7 7" /></svg>
          </IconButton>
        </PanelTitle>
        <PanelBar>
          <ModeButton type="button" $active><OrderIcon />Order</ModeButton>
          <ModeButton type="button"><PlaceIcon />Place</ModeButton>
          <ModeButton type="button"><FillIcon />Fill</ModeButton>
          <BarFields>
            <BarLabel htmlFor="edit-layout">Layout:</BarLabel>
            <Box $w={137}><ListBox id="edit-layout"><option>Equity</option></ListBox><Chevron soft /></Box>
            <PencilButton type="button" aria-label="Edit layout"><Pencil /></PencilButton>
            <BarLabel htmlFor="edit-defaults">Defaults:</BarLabel>
            <Box $w={137}><ListBox id="edit-defaults" /><Chevron soft /></Box>
            <PencilButton type="button" aria-label="Edit defaults"><Pencil /></PencilButton>
          </BarFields>
        </PanelBar>
        <Form>
          <Field $col={1} $row={1}>
            <FieldLabel htmlFor="order-id">Order ID</FieldLabel>
            <TextBox id="order-id" />
          </Field>
          <ListField id="tran" label="Tran" col={2} row={1} grey />
          <SpinField id="quantity" label="Quantity" col={3} />
          <ListField id="security" label="Security" col={4} row={1} />
          <SpinField id="cost" label="Cost (Local)" col={5} />
          <SpinField id="est" label="Est Price" col={6} />
          <SpinField id="avg" label="Avg Price" col={7} />
          <ListField id="limit" label="Limit" col={8} row={1} grey />
          <BigButton type="button" $col={2} $row={2}>New Buy</BigButton>
          <BigButton type="button" $col={3} $row={2}>New Place</BigButton>
          <ListField id="portfolio" label="Portfolio" col={4} row={2} grey />
          <ListField id="broker" label="Broker" col={5} row={2} grey />
          <ListField id="broker-rep" label="Broker Rep" col={6} row={2} grey />
          <DateField id="trade-date" label="Trade Date" col={7} />
          <DateField id="settle-date" label="Settle Date" col={8} />
          <BigButton type="button" $col={2} $row={3}>New Sell</BigButton>
          <BigButton type="button" $col={3} $row={3}>New Fill</BigButton>
          <Approve><Check type="checkbox" disabled />Approve</Approve>
          <BigButton type="button" $col={7} $row={3} disabled>Save</BigButton>
          <BigButton type="button" $col={8} $row={3} disabled>Abort</BigButton>
        </Form>
      </Panel>
      <BottomTabs>
        {bottomTabs.map((name) => (
          <BottomTab key={name} type="button" $active={name === "Order Edit"}>{name}</BottomTab>
        ))}
      </BottomTabs>
      <Pointer width="13" height="20" viewBox="0 0 13 20">
        <path d="M.6 1v15l3.500-3.300 2.600 6 2.300-1-2.600-5.900h5z" fill="#fff" stroke="#333" strokeWidth="1" />
      </Pointer>
    </Page>
  );
}
